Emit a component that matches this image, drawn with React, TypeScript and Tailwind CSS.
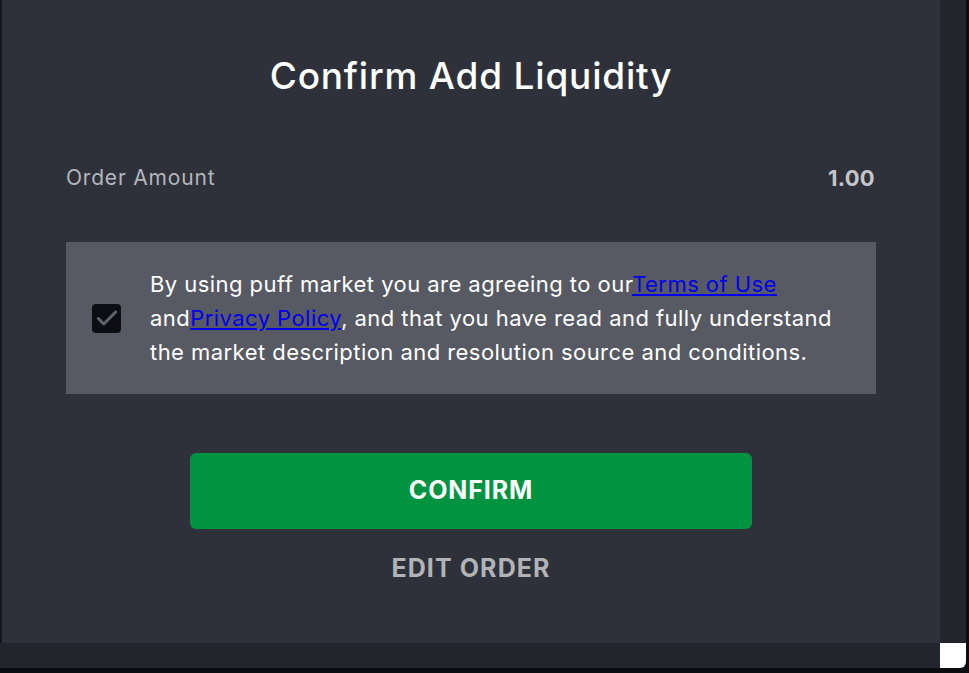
export default function App() {
  return (
    <div className="w-[969px] h-[673px] bg-[#0b0c10] overflow-hidden" style={{ fontFamily: 'Inter, "Noto Sans", sans-serif' }}>
      <div className="w-[966px] h-[668px] flex flex-col">
        <div className="flex h-[643px]">
          <div className="w-[2px] bg-[#15171c]" />
          {/* Modal */}
          <div className="flex-1 bg-[#2e313a] flex flex-col items-center pt-[52px] px-[64px]">
            <h1 className="text-[37px] leading-[48px] font-medium text-white tracking-[0.8px]">Confirm Add Liquidity</h1>
            <div className="w-full flex items-center justify-between mt-[64px]">
              <span className="text-[21px] leading-[28px] text-[#b4b6ba] tracking-[0.8px]">Order Amount</span>
              <span className="text-[22px] leading-[28px] font-bold text-[#c4c6ca] tracking-[0.3px] pr-[1px]">1.00</span>
            </div>
            <div className="w-full bg-[#575a63] mt-[50px] h-[152px] flex items-center pl-[26px] pr-[36px]">
              <div className="w-[29px] h-[29px] shrink-0 rounded-[4px] bg-[#0c0e14] flex items-center justify-center">
                <svg width="22" height="22" viewBox="0 0 24 24" fill="none" stroke="#60646c" strokeWidth="3.2" strokeLinecap="round" strokeLinejoin="round">
                  <path d="M2.5 12.5l6 6L21.5 5.5" />
                </svg>
              </div>
              <p className="ml-[29px] text-[22px] leading-[34px] text-white tracking-[0.45px]">
                By using puff market you are agreeing to our<a href="#" className="text-[#0000ee] underline">Terms of Use</a> and<a href="#" className="text-[#0000ee] underline">Privacy Policy</a>, and that you have read and fully understand the market description and resolution source and conditions.
              </p>
            </div>
            <button className="mt-[59px] w-[562px] h-[76px] rounded-[6px] bg-[#009440] text-white text-[25px] font-bold tracking-[0.9px]">CONFIRM</button>
            <button className="mt-[23px] text-[25px] leading-[32px] font-bold text-[#b1b3b7] tracking-[1.1px]">EDIT ORDER</button>
          </div>
          <div className="w-[26px] bg-[#22252c]" />
        </div>
        <div className="flex h-[25px]">
          <div className="flex-1 bg-[#22252c]" />
          <div className="w-[26px] bg-white rounded-br-[6px]" />
        </div>
      </div>
    </div>
  )
}
